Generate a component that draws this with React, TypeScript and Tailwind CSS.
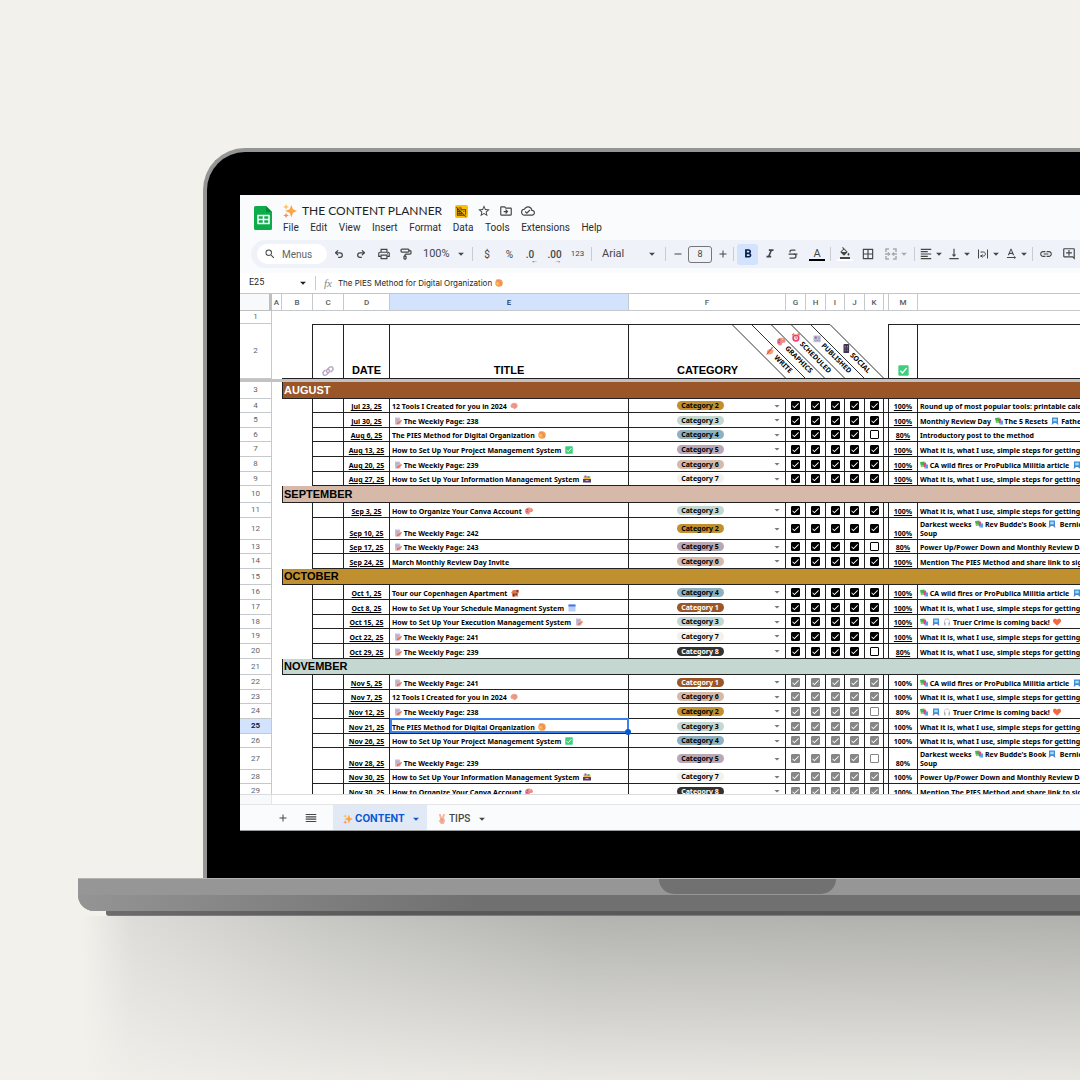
import type { ReactNode } from "react";
import { clsx } from "clsx";
import { PaintRoller, Redo2, Strikethrough, Undo2 } from "lucide-react";
import {
  MdAdd,
  MdArrowDropDown,
  MdBorderAll,
  MdCheck,
  MdDomainDisabled,
  MdFormatAlignLeft,
  MdFormatBold,
  MdFormatColorFill,
  MdFormatItalic,
  MdLink,
  MdOutlineAddComment,
  MdOutlineCloudDone,
  MdOutlineDriveFileMove,
  MdOutlinePrint,
  MdRemove,
  MdReorder,
  MdSearch,
  MdStarOutline,
  MdTextRotationNone,
  MdVerticalAlignBottom,
} from "react-icons/md";

const EMOJI: Record<string, ReactNode> = {
  sparkles: (
    <>
      <path d="M9.500 1l1.900 5.100L16 8l-4.600 1.900L9.500 15.500l-1.900-5.600L2.500 8l5.100-1.900z" fill="#fda444" />
      <path d="M3.500 0l1 2.400 2.400.9-2.400.9-1 2.300-1-2.300L.1 3.300l2.400-.9z" fill="#fdbf60" />
      <path d="M3.500 10l1 2.300 2.400.9-2.400.9-1 1.900-1-1.900L.1 13.200l2.400-.9z" fill="#f98b5a" />
    </>
  ),
  brain: (
    <>
      <path d="M4 3c2-2 7-2 9 0 3 2 3 6 1 8-1 2-3 1-4 3-2 1-3 0-3-2-3 1-6-1-6-4 0-2 1-4 3-5z" fill="#f2a493" />
      <path d="M5 4c2 0 2 2 4 1s3 1 4 0M3 8c2-1 3 1 5 0s4 1 6 0M8 12c1-1 3 0 4-1" fill="none" stroke="#d9706c" />
    </>
  ),
  memo: (
    <>
      <path d="M2 1h9l2 3v11H2z" fill="#c9bcd8" />
      <path d="M4 5h6M4 8h5" stroke="#a79bbd" />
      <path d="M15 6l1 2-7 6-4 1 1-4z" fill="#f4733d" />
    </>
  ),
  orange: (
    <>
      <circle cx="8" cy="8" r="7.500" fill="#f7a04b" />
      <path d="M3 2c5 0 10 4 9 11" fill="none" stroke="#ef7b6a" strokeWidth="2" />
      <circle cx="5" cy="9" r="2.500" fill="#fcc56b" />
    </>
  ),
  check: (
    <>
      <rect x="0.5" y="0.5" width="15" height="15" rx="1.500" fill="#3ecf7d" />
      <path d="M3.500 8.500l3 3 6-7" fill="none" stroke="#fff" strokeWidth="2" />
    </>
  ),
  palette: (
    <>
      <path d="M8 1c5 0 8 3 8 6s-3 3-5 3-1 5-4 5c-4 0-7-3-7-7s3-7 8-7z" fill="#ee8a86" />
      <circle cx="5" cy="5" r="1.700" fill="#7b5cc4" />
      <circle cx="10" cy="4" r="1.500" fill="#ffd15e" />
      <circle cx="4" cy="9.500" r="1.500" fill="#d8356f" />
    </>
  ),
  house: (
    <>
      <path d="M0 8l4-6h9l3 6-2 1v6H2V9z" fill="#e27c4b" />
      <path d="M4 9h3v6H4zM9 9h3v3H9z" fill="#5b3342" />
      <circle cx="13" cy="4" r="2.500" fill="#8c3a3a" />
    </>
  ),
  calendar: (
    <>
      <rect x="1" y="1" width="14" height="14" rx="1" fill="#b9cdf5" />
      <path d="M1 1h14v4H1z" fill="#3f77ea" />
    </>
  ),
  cardbox: (
    <>
      <path d="M1 3h14v6H1z" fill="#f5b94a" />
      <path d="M3 1h4v4H3z" fill="#8a5ad1" />
      <path d="M9 2h4v4H9z" fill="#47b87c" />
      <path d="M0 8h16v7H0z" fill="#56406f" />
      <path d="M5 10h6v2H5z" fill="#d6a9c4" />
    </>
  ),
  books: (
    <>
      <path d="M0 2l9-1 1 10-8 1z" fill="#47b648" />
      <path d="M7 4l5-1 1 9-5 1z" fill="#e0428b" />
      <path d="M11 7h5v8h-7v-2h2z" fill="#4ea3ea" />
      <path d="M2 9h5v2H3z" fill="#b8e58e" />
    </>
  ),
  bookmark: (
    <>
      <path d="M2 1h12v11H2z" fill="#3c8fd8" />
      <path d="M4.500 3.500h7v5h-7z" fill="#a2dcf4" />
      <path d="M2 12h4l-3 3H1zM10 12h4l1 3h-2z" fill="#7d75b8" />
    </>
  ),
  headphones: (
    <>
      <path d="M3 12V7c0-7 10-7 10 0v5" fill="none" stroke="#b9b8c4" strokeWidth="1.500" />
      <path d="M2 9h3v6H3zM11 9h3l-1 6h-2z" fill="#a19fb0" />
    </>
  ),
  heart: <path d="M8 15C2 11 0 8 0 5c0-4 6-5 8-1 2-4 8-3 8 1 0 3-2 6-8 10z" fill="#f5673f" />,
  link: (
    <g fill="none" stroke="#b9a6c6" strokeWidth="2" strokeLinecap="round">
      <path d="M7 10c-2-2-1-3 0-4l3-3c3-2 6 1 4 4l-2 2" />
      <path d="M9 6c2 2 1 3 0 4l-3 3c-3 2-6-1-4-4l2-2" />
    </g>
  ),
  writing: (
    <>
      <path d="M2 8c4-5 8-4 12-1l-2 5c-4 3-8 3-10 0z" fill="#f2a07a" />
      <path d="M0 15L11 1l2 1L3 14z" fill="#e0533c" />
    </>
  ),
  clock: (
    <>
      <circle cx="8" cy="9" r="6.500" fill="#ea4068" />
      <circle cx="8" cy="9" r="3.700" fill="#fbdde2" />
      <path d="M1 4l4-3M15 4l-4-3" stroke="#f26a55" strokeWidth="2.500" />
      <path d="M8 6v3h2" fill="none" stroke="#7b3350" />
    </>
  ),
  news: (
    <>
      <path d="M1 2h13v12H1z" fill="#c6bfd6" />
      <path d="M3 4h4v4H3z" fill="#8578a5" />
      <path d="M9 5h4M9 8h4M3 11h9" stroke="#8f86ab" />
    </>
  ),
  phone: (
    <>
      <rect x="3" y="0" width="10" height="16" rx="1.500" fill="#3c3550" />
      <path d="M5 3h2v2H5zM9 3h2v2H9zM5 10h2v2H5z" fill="#f0635f" />
      <path d="M5 6h2v2H5zM9 6h2v2H9zM9 10h2v2H9z" fill="#5c86ef" />
    </>
  ),
  peace: (
    <>
      <path d="M3 0h3l2 6 2-6h3l-2 7 2 3-2 6H6l-3-5 2-3z" fill="#f7b59a" />
      <path d="M5 9c2-2 5-1 6 1M6 12c2-1 3-1 4 0" fill="none" stroke="#e2745f" />
    </>
  ),
};

function Emoji({ name, className = "size-2 align-[-1px]" }: { name: string; className?: string }) {
  return (
    <svg viewBox="0 0 16 16" aria-hidden="true" className={clsx("inline-block shrink-0", className)}>
      {EMOJI[name]}
    </svg>
  );
}

// ":name:" inside a string becomes the emoji of that name
function Rich({ text }: { text: string }) {
  return (
    <>
      {text.split(/:([a-z]+):/).map((part, i) => (i % 2 ? <Emoji key={i} name={part} /> : part))}
    </>
  );
}

type Item = {
  kind: "item";
  n: number;
  h: string;
  date: string;
  title: string;
  cat: number;
  pct: number;
  note: string;
  draft?: boolean;
};
type Month = { kind: "month"; n: number; h: string; name: string; color: string };

const H14 = "h-[14px]";
const H15 = "h-[15px]";
const H16 = "h-[16px]";
const H17 = "h-[17px]";
const H22 = "h-[22px]";

const HOW = "What it is, what I use, simple steps for getting started";
const FIRES = ":books: CA wild fires or ProPublica Militia article  :bookmark: Next";
const CRIME = ":books:  :bookmark:  :headphones: Truer Crime is coming back!  :heart:";
const DARK = "Darkest weeks  :books: Rev Budde's Book :bookmark:  Bernie\nSoup";
const POWER = "Power Up/Power Down and Monthly Review Day";
const MENTION = "Mention The PIES Method and share link to sign up";

const ROWS: (Item | Month)[] = [
  { kind: "month", n: 3, h: H17, name: "AUGUST", color: "bg-[#9a5628] text-white" },
  { kind: "item", n: 4, h: H14, date: "Jul 23, 25", title: "12 Tools I Created for you in 2024  :brain:", cat: 2, pct: 100, note: "Round up of most popular tools: printable calendars" },
  { kind: "item", n: 5, h: H15, date: "Jul 30, 25", title: " :memo: The Weekly Page: 238", cat: 3, pct: 100, note: "Monthly Review Day  :books: The 5 Resets  :bookmark: Father" },
  { kind: "item", n: 6, h: H14, date: "Aug 6, 25", title: "The PIES Method for Digital Organization  :orange:", cat: 4, pct: 80, note: "Introductory post to the method" },
  { kind: "item", n: 7, h: H15, date: "Aug 13, 25", title: "How to Set Up Your Project Management System  :check:", cat: 5, pct: 100, note: HOW },
  { kind: "item", n: 8, h: H15, date: "Aug 20, 25", title: " :memo: The Weekly Page: 239", cat: 6, pct: 100, note: FIRES },
  { kind: "item", n: 9, h: H14, date: "Aug 27, 25", title: "How to Set Up Your Information Management System  :cardbox:", cat: 7, pct: 100, note: HOW },
  { kind: "month", n: 10, h: H17, name: "SEPTEMBER", color: "bg-[#d6b9a9]" },
  { kind: "item", n: 11, h: H15, date: "Sep 3, 25", title: "How to Organize Your Canva Account  :palette:", cat: 3, pct: 100, note: HOW },
  { kind: "item", n: 12, h: H22, date: "Sep 10, 25", title: " :memo: The Weekly Page: 242", cat: 2, pct: 100, note: DARK },
  { kind: "item", n: 13, h: H14, date: "Sep 17, 25", title: " :memo: The Weekly Page: 243", cat: 5, pct: 80, note: POWER },
  { kind: "item", n: 14, h: H15, date: "Sep 24, 25", title: "March Monthly Review Day Invite", cat: 6, pct: 100, note: MENTION },
  { kind: "month", n: 15, h: H16, name: "OCTOBER", color: "bg-[#c0902e]" },
  { kind: "item", n: 16, h: H15, date: "Oct 1, 25", title: "Tour our Copenhagen Apartment  :house:", cat: 4, pct: 100, note: FIRES },
  { kind: "item", n: 17, h: H15, date: "Oct 8, 25", title: "How to Set Up Your Schedule Managment System  :calendar:", cat: 1, pct: 100, note: HOW },
  { kind: "item", n: 18, h: H14, date: "Oct 15, 25", title: "How to Set Up Your Execution Management System  :memo:", cat: 3, pct: 100, note: CRIME },
  { kind: "item", n: 19, h: H15, date: "Oct 22, 25", title: " :memo: The Weekly Page: 241", cat: 7, pct: 100, note: HOW },
  { kind: "item", n: 20, h: H15, date: "Oct 29, 25", title: " :memo: The Weekly Page: 239", cat: 8, pct: 80, note: HOW },
  { kind: "month", n: 21, h: H16, name: "NOVEMBER", color: "bg-[#c4d7d0]" },
  { kind: "item", n: 22, h: H15, date: "Nov 5, 25", title: " :memo: The Weekly Page: 241", cat: 1, pct: 100, note: FIRES, draft: true },
  { kind: "item", n: 23, h: H14, date: "Nov 7, 25", title: "12 Tools I Created for you in 2024  :brain:", cat: 6, pct: 100, note: HOW, draft: true },
  { kind: "item", n: 24, h: H15, date: "Nov 12, 25", title: " :memo: The Weekly Page: 238", cat: 2, pct: 80, note: CRIME, draft: true },
  { kind: "item", n: 25, h: H15, date: "Nov 21, 25", title: "The PIES Method for Digital Organization  :orange:", cat: 3, pct: 100, note: HOW, draft: true },
  { kind: "item", n: 26, h: H14, date: "Nov 26, 25", title: "How to Set Up Your Project Management System  :check:", cat: 4, pct: 100, note: HOW, draft: true },
  { kind: "item", n: 27, h: H22, date: "Nov 28, 25", title: " :memo: The Weekly Page: 239", cat: 5, pct: 80, note: DARK, draft: true },
  { kind: "item", n: 28, h: H14, date: "Nov 30, 25", title: "How to Set Up Your Information Management System  :cardbox:", cat: 7, pct: 100, note: POWER, draft: true },
  { kind: "item", n: 29, h: H15, date: "Nov 30, 25", title: "How to Organize Your Canva Account  :palette:", cat: 8, pct: 100, note: MENTION, draft: true },
];

const CHIP: Record<number, string> = {
  1: "bg-[#9a5628] text-white",
  2: "bg-[#c0902e] text-black",
  3: "bg-[#c4d7d0] text-black",
  4: "bg-[#8fb0bf] text-black",
  5: "bg-[#b9a7b5] text-black",
  6: "bg-[#d6b9a9] text-black",
  7: "bg-[#f2f1ec] text-black",
  8: "bg-[#333333] text-white",
};

const COLS = ["A", "B", "C", "D", "E", "F", "G", "H", "I", "J", "K", "", "M", ""];
const STEPS = [
  { label: "WRITE", icon: "writing" },
  { label: "GRAPHICS", icon: "palette" },
  { label: "SCHEDULED", icon: "clock" },
  { label: "PUBLISHED", icon: "news" },
  { label: "SOCIAL", icon: "phone" },
];

const MENUS = ["File", "Edit", "View", "Insert", "Format", "Data", "Tools", "Extensions", "Help"];

const LINE = "border-[#222]";

function RowHead({ n, h }: { n: number; h?: string }) {
  return (
    <th
      scope="row"
      className={clsx(
        "border-r border-b border-[#c6c9cc] p-0 text-center align-middle font-[Roboto,sans-serif] text-[8px] leading-[10px]",
        h,
        n === 25 ? "bg-[#d3e3fd] font-bold text-[#041e49]" : "font-normal text-[#5f6368]"
      )}
    >
      {n}
    </th>
  );
}

function Tick({ label, checked, draft }: { label: string; checked: boolean; draft?: boolean }) {
  return (
    <span className="relative mx-auto block size-[9px]">
      <input
        type="checkbox"
        aria-label={label}
        defaultChecked={checked}
        className={clsx(
          "peer block size-full appearance-none rounded-[1px] border bg-white",
          draft ? "border-[#868686] checked:bg-[#868686]" : "border-black checked:bg-black"
        )}
      />
      <MdCheck className="pointer-events-none absolute inset-0 hidden size-full stroke-white text-white peer-checked:block" />
    </span>
  );
}

function ItemRow({ row }: { row: Item }) {
  const cell = clsx("border-r border-b p-0", LINE);
  return (
    <tr>
      <RowHead n={row.n} h={row.h} />
      <td />
      <td className={clsx("border-r", LINE)} />
      <td className={cell} />
      <td className={clsx(cell, "text-center align-bottom underline")}>{row.date}</td>
      <td className={clsx(cell, "relative pl-0.5 align-bottom whitespace-pre")}>
        <Rich text={row.title} />
        {row.n === 25 && (
          <span className="pointer-events-none absolute -top-px -right-px bottom-0 left-0 border-2 border-[#3b82ec]">
            <span className="absolute -right-1 -bottom-1 z-10 size-1.5 rounded-full bg-[#0b57d0]" />
          </span>
        )}
      </td>
      <td className={clsx(cell, "align-middle")}>
        <div className="flex items-center">
          <div className="flex flex-1 justify-center">
            <select
              aria-label={`Category, row ${row.n}`}
              defaultValue={row.cat}
              className={clsx("block h-[9px] w-[47px] appearance-none rounded-full p-0 text-center leading-[9px]", CHIP[row.cat])}
            >
              {[1, 2, 3, 4, 5, 6, 7, 8].map((c) => (
                <option key={c} value={c}>{`Category ${c}`}</option>
              ))}
            </select>
          </div>
          <MdArrowDropDown className="mr-0.5 size-3 text-[#777]" />
        </div>
      </td>
      {STEPS.map((s, i) => (
        <td key={s.label} className={clsx(cell, "align-middle")}>
          <Tick label={`${s.label}, row ${row.n}`} checked={i < 4 || row.pct === 100} draft={row.draft} />
        </td>
      ))}
      <td className={cell} />
      <td className={clsx(cell, "text-center align-bottom", !row.draft && "underline")}>{row.pct}%</td>
      <td className="overflow-hidden border-b border-[#222] p-0 pb-px pl-0.5 align-bottom leading-[9px] whitespace-pre">
        <Rich text={row.note} />
      </td>
    </tr>
  );
}

function Sheet() {
  const head = clsx("border-t border-b p-0 pb-px align-bottom font-['Liberation_Sans',Arial,sans-serif]", LINE);
  return (
    <table className="w-full table-fixed border-separate border-spacing-0 bg-white font-['Noto_Sans',sans-serif] text-[7px] leading-[11px] font-bold text-black">
      <colgroup>
        <col className="w-[32px]" />
        <col className="w-[10px]" />
        <col className="w-[31px]" />
        <col className="w-[31px]" />
        <col className="w-[46px]" />
        <col className="w-[239px]" />
        <col className="w-[157px]" />
        <col className="w-[20px]" />
        <col className="w-[20px]" />
        <col className="w-[19px]" />
        <col className="w-[20px]" />
        <col className="w-[19px]" />
        <col className="w-[5px]" />
        <col className="w-[29px]" />
        <col />
      </colgroup>
      <thead className="font-[Roboto,sans-serif]">
        <tr className="text-[8px] font-medium text-[#575b5f]">
          <td className="h-[17px] border-r-3 border-b border-[#bdbfc1] bg-[#f8f9fa] p-0" />
          {COLS.map((c, i) => (
            <th
              key={i}
              scope="col"
              className={clsx(
                "border-b border-[#c6c9cc] p-0 text-center font-medium",
                i < COLS.length - 1 && "border-r",
                c === "E" && "bg-[#d3e3fd] text-[#1f3a66]"
              )}
            >
              {c}
            </th>
          ))}
        </tr>
      </thead>
      <tbody>
        <tr>
          <RowHead n={1} h="h-[13px]" />
          <td colSpan={14} />
        </tr>
        <tr className="text-[11px] leading-[14px]">
          <RowHead n={2} h="h-[55px]" />
          <td />
          <td className={clsx("border-r border-b", LINE)} />
          <th className={clsx(head, "border-r")}>
            <Emoji name="link" className="size-3" />
          </th>
          <th className={clsx(head, "border-r")}>DATE</th>
          <th className={clsx(head, "border-r")}>TITLE</th>
          <th className={head}>CATEGORY</th>
          {STEPS.map((s, i) => (
            <th key={s.label} className={clsx("relative border-b p-0 text-[7px] leading-[9px]", LINE)}>
              {i === 0 && (
                <svg viewBox="0 0 152 55" className="absolute top-0 -left-[54px] h-[55px] w-[152px] max-w-none" fill="none" stroke="#333" aria-hidden="true">
                  <path d="M50 .5h48M0 .5l54 54M19.500.5l54 54M39 .5l54 54M59 .5l54 54M78.500.5l54 54M98 .5l54 54" />
                </svg>
              )}
              <span className="absolute right-[18px] bottom-[3px] flex origin-bottom-right rotate-45 items-center gap-[3px] whitespace-nowrap">
                <Emoji name={s.icon} className="size-[9px] -rotate-45" />
                {s.label}
              </span>
            </th>
          ))}
          <td className={clsx("border-r border-b", LINE)} />
          <th className={clsx(head, "border-r")}>
            <Emoji name="check" className="mb-px size-[11px]" />
          </th>
          <td className={clsx("border-t border-b", LINE)} />
        </tr>
        <tr>
          <td colSpan={15} className="h-[3px] bg-[#c2c2c2] p-0" />
        </tr>
        {ROWS.map((row) =>
          row.kind === "item" ? (
            <ItemRow key={row.n} row={row} />
          ) : (
            <tr key={row.n}>
              <RowHead n={row.n} h={row.h} />
              <td />
              <td
                colSpan={13}
                className={clsx(
                  "border-b border-l p-0 pl-px text-left font-['Liberation_Sans',Arial,sans-serif] text-[11px] leading-[13px]",
                  LINE,
                  row.color
                )}
              >
                {row.name}
              </td>
            </tr>
          )
        )}
      </tbody>
    </table>
  );
}

function Tool({ label, className, children }: { label: string; className?: string; children: ReactNode }) {
  return (
    <button aria-label={label} className={clsx("flex shrink-0 items-center justify-center", className)}>
      {children}
    </button>
  );
}

const Divider = ({ className }: { className?: string }) => <span className={clsx("h-3.5 w-px shrink-0 bg-[#c9ccd1]", className)} />;
const Caret = () => <MdArrowDropDown className="-mx-px size-3.5 shrink-0" />;

function Toolbar() {
  return (
    <div className="ml-[11px] flex h-7 items-center overflow-hidden rounded-l-full bg-[#eff3f9] text-[#444746]">
      <label className="ml-1.5 flex h-5 w-[70px] shrink-0 items-center rounded-full bg-white pl-[7px]">
        <MdSearch className="size-3 shrink-0" />
        <input aria-label="Menus" placeholder="Menus" className="ml-1.5 w-10 bg-transparent text-[10px] outline-none placeholder:text-[#5f6368]" />
      </label>
      <Tool label="Undo" className="ml-px w-[22px]"><Undo2 className="size-2.5" strokeWidth={3} /></Tool>
      <Tool label="Redo" className="w-[22px]"><Redo2 className="size-2.5" strokeWidth={3} /></Tool>
      <Tool label="Print" className="w-[23px]"><MdOutlinePrint className="size-3.5" /></Tool>
      <Tool label="Paint format" className="w-[22px]"><PaintRoller className="size-3" strokeWidth={2.5} /></Tool>
      <label className="ml-1.5 flex w-[49px] shrink-0 items-center">
        <select aria-label="Zoom" className="w-8 appearance-none p-0 text-[11px]">
          <option>100%</option>
        </select>
        <Caret />
      </label>
      <Divider />
      <Tool label="Currency" className="ml-[3px] w-[22px] text-[10px]">$</Tool>
      <Tool label="Percent" className="w-[23px] text-[10px]">%</Tool>
      <Tool label="Decrease decimals" className="w-[22px] text-[10px] font-medium">
        <span className="relative pr-1">.0<span className="absolute right-0 -bottom-[3px] text-[7px] leading-[7px]">←</span></span>
      </Tool>
      <Tool label="Increase decimals" className="w-[23px] text-[10px] font-medium">
        <span className="relative">.00<span className="absolute right-0 -bottom-[3px] text-[7px] leading-[7px]">→</span></span>
      </Tool>
      <Tool label="More formats" className="w-[23px] text-[8px]">123</Tool>
      <Divider className="ml-0.5" />
      <label className="ml-2.5 flex w-14 shrink-0 items-center">
        <select aria-label="Font" className="w-11 appearance-none p-0 text-[11px]">
          <option>Arial</option>
        </select>
        <Caret />
      </label>
      <Divider className="ml-[7px]" />
      <Tool label="Smaller" className="ml-px w-[21px]"><MdRemove className="size-3" /></Tool>
      <input aria-label="Font size" defaultValue="8" className="h-[17px] w-6 shrink-0 rounded-[3px] border border-[#747775] text-center text-[9px]" />
      <Tool label="Larger" className="w-[21px]"><MdAdd className="size-3" /></Tool>
      <Divider />
      <Tool label="Bold" className="ml-[3px] h-[21px] w-[21px] rounded-[3px] bg-[#d3e3fd] text-[#041e49]"><MdFormatBold className="size-3.5" /></Tool>
      <Tool label="Italic" className="w-6"><MdFormatItalic className="size-3.5" /></Tool>
      <Tool label="Strikethrough" className="w-[22px]"><Strikethrough className="size-3" strokeWidth={2.5} /></Tool>
      <Tool label="Text color" className="w-[26px]"><span className="border-b-2 border-black px-1 text-[11px] leading-[11px]">A</span></Tool>
      <Divider />
      <Tool label="Fill color" className="ml-0.5 w-[23px]"><span className="border-b-2 border-white px-0.5"><MdFormatColorFill className="size-3" /></span></Tool>
      <Tool label="Borders" className="w-6"><MdBorderAll className="size-3.5" /></Tool>
      <Tool label="Merge cells" className="w-[34px] text-[#a9abac]">
        <svg viewBox="0 0 14 14" className="size-3.5" fill="none" stroke="currentColor" strokeWidth="1.500">
          <path d="M5 2H2v3M9 2h3v3M5 12H2V9M9 12h3V9M1 7h4M13 7H9M4 5.500L5.500 7 4 8.500M10 5.500L8.500 7 10 8.500" />
        </svg>
        <Caret />
      </Tool>
      <Divider />
      <Tool label="Horizontal align" className="ml-1 w-[26px]"><MdFormatAlignLeft className="size-3.5" /><Caret /></Tool>
      <Tool label="Vertical align" className="ml-0.5 w-[26px]"><MdVerticalAlignBottom className="size-3.5" /><Caret /></Tool>
      <Tool label="Text wrapping" className="ml-0.5 w-[27px]">
        <svg viewBox="0 0 14 14" className="size-3.5" fill="none" stroke="currentColor">
          <path d="M2.500 2.500v9M11.500 2.500v9M4 9h3.500c2.500 0 2.500-4 0-4H4.500M6.500 7.500L5 9l1.500 1.500" />
        </svg>
        <Caret />
      </Tool>
      <Tool label="Text rotation" className="ml-0.5 w-[26px]"><MdTextRotationNone className="size-3.5" /><Caret /></Tool>
      <Divider className="ml-0.5" />
      <Tool label="Insert link" className="ml-px w-[23px]"><MdLink className="size-3.5" /></Tool>
      <Tool label="Insert comment" className="w-[23px]"><MdOutlineAddComment className="size-3.5" /></Tool>
    </div>
  );
}

function Header() {
  return (
    <header className="flex h-[45px] items-start pt-2">
      <svg viewBox="0 0 18 24" className="mt-[3px] ml-3.5 h-6 w-[18px] shrink-0" aria-hidden="true">
        <path d="M1.500 0H12l6 6v16.500a1.500 1.500 0 0 1-1.500 1.500h-15A1.500 1.500 0 0 1 0 22.500v-21A1.500 1.500 0 0 1 1.500 0z" fill="#0cac4b" />
        <path d="M12 0l6 6h-6z" fill="#078a38" />
        <path d="M4 9.500h11v8H4zM4 13.500h11M9.500 9.500v8" fill="none" stroke="#fff" strokeWidth="1.500" />
      </svg>
      <div className="ml-[11px]">
        <div className="flex h-4 items-center">
          <Emoji name="sparkles" className="size-3.5" />
          <h1 className="ml-[5px] font-[Lato,sans-serif] text-[12px] leading-4 text-[#1f1f1f]">THE CONTENT PLANNER</h1>
          <span className="ml-[13px] flex size-[13px] items-center justify-center rounded-[2px] bg-[#fbbc04] text-[#4a3b05]">
            <MdDomainDisabled className="size-[11px]" />
          </span>
          <Tool label="Star" className="ml-2 w-4 text-[#444746]"><MdStarOutline className="size-3.5" /></Tool>
          <Tool label="Move" className="ml-1.5 w-4 text-[#444746]"><MdOutlineDriveFileMove className="size-3.5" /></Tool>
          <Tool label="Saved to Drive" className="ml-1.5 w-4 text-[#444746]"><MdOutlineCloudDone className="size-3.5" /></Tool>
        </div>
        <nav className="flex h-4 w-[319px] items-center justify-between text-[10px] text-[#2b2d2f]">
          {MENUS.map((m) => (
            <button key={m}>{m}</button>
          ))}
        </nav>
      </div>
    </header>
  );
}

function Screen() {
  return (
    <div className="overflow-hidden border-b border-[#9a9a9a] bg-[#f9fbfd] font-[Roboto,sans-serif]">
      <Header />
      <Toolbar />
      <div className="mt-[5px] flex h-[21px] items-center border-b border-[#c4c7c9] bg-white text-[#1f1f1f]">
        <input aria-label="Cell" defaultValue="E25" className="ml-[9px] w-12 text-[9px]" />
        <Caret />
        <Divider className="ml-1.5" />
        <span className="ml-2 font-['Liberation_Serif',serif] text-[11px] text-[#80868b] italic">fx</span>
        <input
          aria-label="Formula"
          defaultValue="The PIES Method for Digital Organization"
          className="ml-1.5 field-sizing-content font-[Inter,sans-serif] text-[8px]"
        />
        <Emoji name="orange" className="ml-[3px] size-2" />
      </div>
      <div className="h-[501px] overflow-hidden border-b border-[#dadce0]">
        <Sheet />
      </div>
      <div className="flex h-[10px] border-b border-[#e3e5e8] bg-white">
        <span className="w-8 border-r border-[#e3e5e8] bg-[#f8f9fa]" />
      </div>
      <div className="flex h-[25px] items-stretch text-[#444746]">
        <Tool label="Add sheet" className="ml-8 w-[22px]"><MdAdd className="size-3" /></Tool>
        <Tool label="All sheets" className="ml-1.5 w-[22px]"><MdReorder className="size-3.5" /></Tool>
        <button className="ml-[11px] flex w-[94px] items-center bg-[#e1e9f7] pt-0.5 pl-2.5 text-[10px] font-bold text-[#0b57d0]">
          <Emoji name="sparkles" className="size-[10px]" />
          <span className="ml-0.5 w-[55px] text-left font-[Inter,sans-serif]">CONTENT</span>
          <Caret />
        </button>
        <button className="flex items-center pt-0.5 pl-2.5 text-[10px] font-medium">
          <Emoji name="peace" className="size-[10px]" />
          <span className="ml-0.5 w-[27px] text-left">TIPS</span>
          <Caret />
        </button>
      </div>
    </div>
  );
}

export default function App() {
  return (
    <main className="flex min-h-screen flex-col overflow-hidden bg-[#f2f1ec] pt-[148px]">
      {/* Lid */}
      <div className="ml-[203px] rounded-tl-[42px] border-t-4 border-l-4 border-[#959595] bg-black pt-[43px] pb-[47px] pl-[33px]">
        <Screen />
      </div>
      {/* Base */}
      <div className="ml-[78px] overflow-hidden rounded-bl-[16px] bg-[#969696]">
        <div className="h-[17px] border-t border-[#b3b3b1]">
          <div className="ml-[581px] h-[15px] w-[177px] rounded-b-[15px] bg-[#717171]" />
        </div>
        <div className="h-4 bg-linear-to-r from-[#949494] to-[#707070] to-40%" />
      </div>
      <div className="ml-[106px] h-[5px] rounded-bl-[3px] border-b border-[#7d7d7d] bg-linear-to-r from-[#6c6c6c] to-[#585858] to-30%" />
      {/* Shadow on the desk */}
      <div className="ml-[82px] min-h-[164px] flex-1 bg-[linear-gradient(to_bottom,#f2f1ec00,#f2f1ecd9),linear-gradient(to_right,#f2f1ec,#dddcd8_5%,#c6c6c2_25%,#b3b3af_50%,#b0b0ac)]" />
    </main>
  );
}
